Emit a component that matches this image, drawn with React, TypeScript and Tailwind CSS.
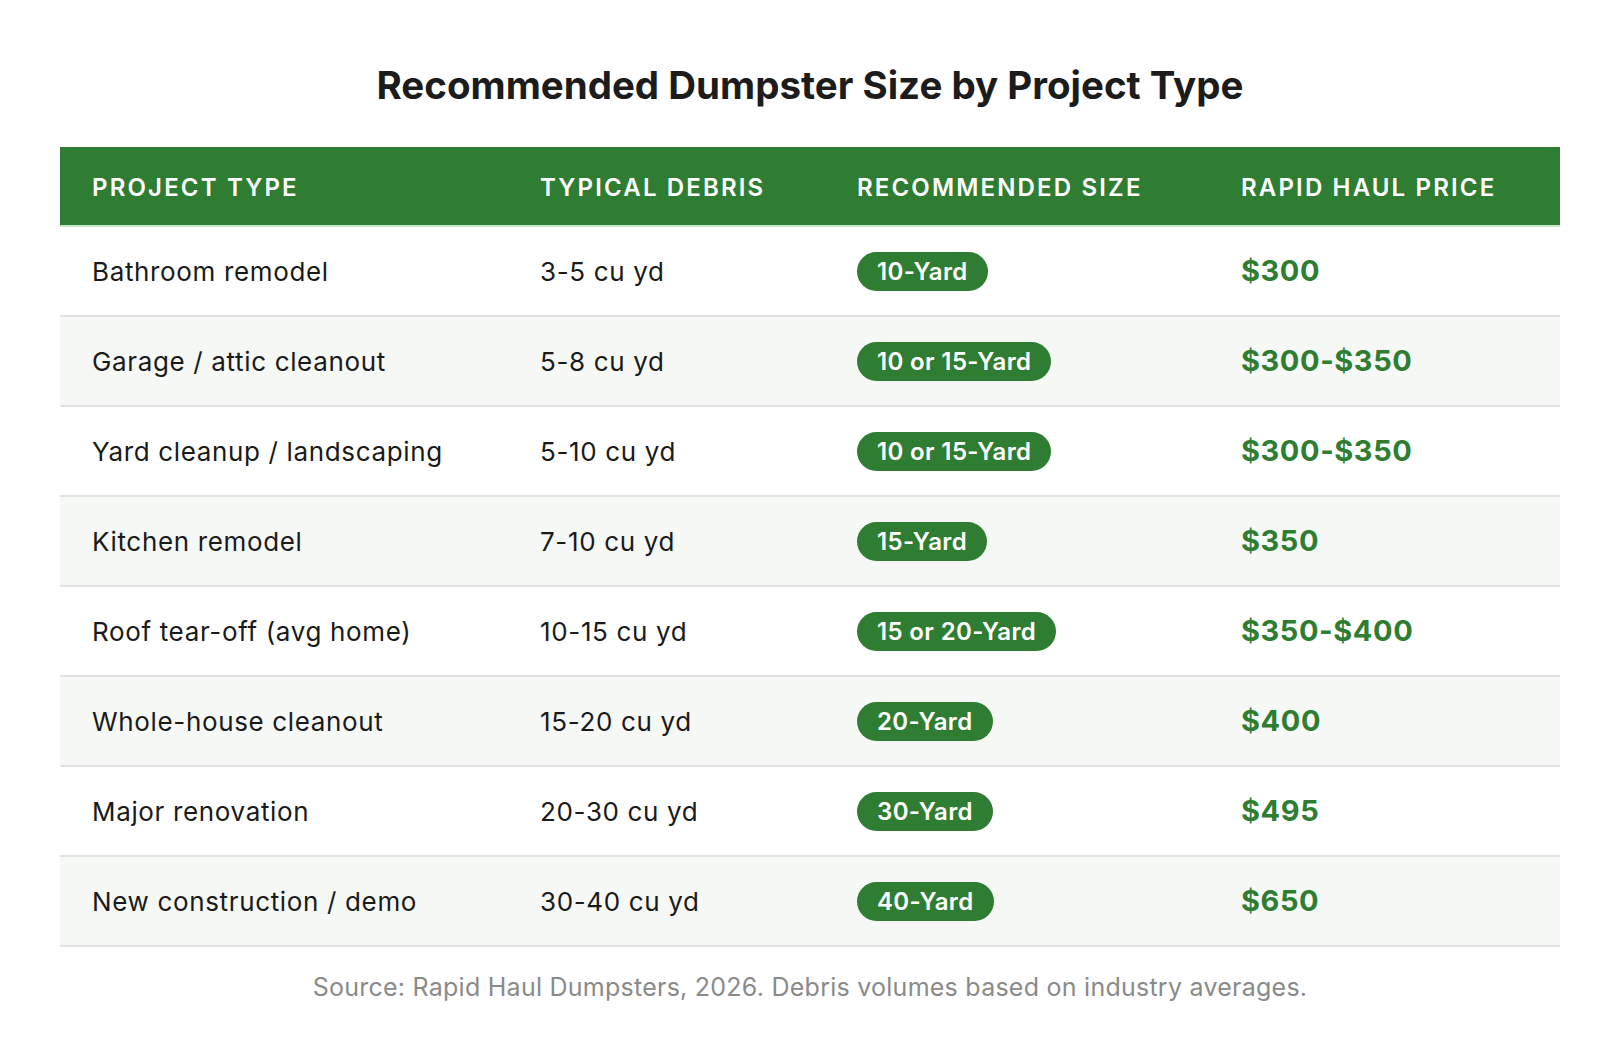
const rows = [
  { project: "Bathroom remodel", debris: "3-5 cu yd", size: "10-Yard", price: "$300" },
  { project: "Garage / attic cleanout", debris: "5-8 cu yd", size: "10 or 15-Yard", price: "$300-$350" },
  { project: "Yard cleanup / landscaping", debris: "5-10 cu yd", size: "10 or 15-Yard", price: "$300-$350" },
  { project: "Kitchen remodel", debris: "7-10 cu yd", size: "15-Yard", price: "$350" },
  { project: "Roof tear-off (avg home)", debris: "10-15 cu yd", size: "15 or 20-Yard", price: "$350-$400" },
  { project: "Whole-house cleanout", debris: "15-20 cu yd", size: "20-Yard", price: "$400" },
  { project: "Major renovation", debris: "20-30 cu yd", size: "30-Yard", price: "$495" },
  { project: "New construction / demo", debris: "30-40 cu yd", size: "40-Yard", price: "$650" },
];

const headers = ["Project Type", "Typical Debris", "Recommended Size", "Rapid Haul Price"];

export default function App() {
  return (
    <div className="min-h-screen bg-white px-[60px] pt-[63px] pb-10 font-['Inter',sans-serif] text-[#1a1a1a]">
      <h1 className="text-center text-[38.5px] leading-[44px] font-bold text-[#1c1c1c]">
        Recommended Dumpster Size by Project Type
      </h1>

      <div className="mt-[40px]">
        <div className="grid grid-cols-[448px_317px_384px_351px] h-[80px] bg-[#2e7d32] border-b-2 border-[#c8e6c9]">
          {headers.map((h) => (
            <div
              key={h}
              className="flex items-center px-8 pt-[3px] text-[24px] font-semibold uppercase tracking-[0.09em] text-white"
            >
              {h}
            </div>
          ))}
        </div>

        {rows.map((r, i) => (
          <div
            key={r.project}
            className={`grid grid-cols-[448px_317px_384px_351px] h-[90px] border-b-2 border-[#e2e2e2] ${
              i % 2 === 1 ? "bg-[#f6f8f6]" : "bg-white"
            }`}
          >
            <div className="flex items-center px-8 text-[26px] tracking-[0.025em]">{r.project}</div>
            <div className="flex items-center px-8 text-[26px] tracking-[0.025em]">{r.debris}</div>
            <div className="flex items-center px-8">
              <span className="inline-flex h-[39px] items-center rounded-full bg-[#2e7d32] px-5 pt-px text-[24px] font-semibold tracking-[0.015em] text-white">
                {r.size}
              </span>
            </div>
            <div className="flex items-center px-8 text-[29px] font-bold tracking-[0.02em] text-[#2e7d32]">
              {r.price}
            </div>
          </div>
        ))}
      </div>

      <p className="mt-[25px] text-center text-[25px] leading-[30px] tracking-[0.01em] text-[#8a8a8a]">
        Source: Rapid Haul Dumpsters, 2026. Debris volumes based on industry averages.
      </p>
    </div>
  );
}
